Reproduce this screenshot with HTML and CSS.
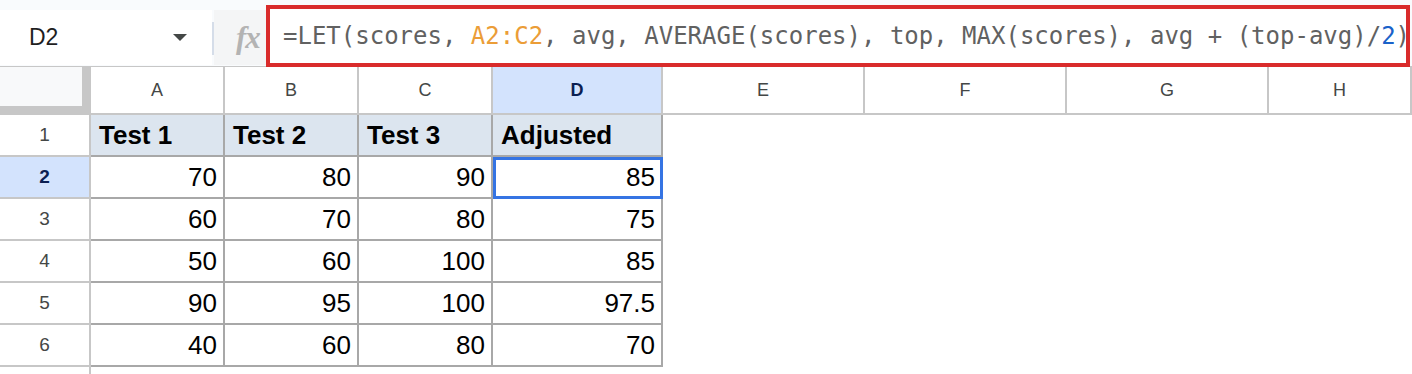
FILE: index.html
```html
<!DOCTYPE html>
<html lang="en">
<head>
    <meta charset="UTF-8">
    <title>Scores - LET formula</title>
    <link rel="stylesheet" href="styles.css">
</head>
<body>
    <div class="toolbar">
        <div class="name-box">
            <span class="cell-ref">D2</span>
            <span class="caret"></span>
        </div>
        <div class="divider"></div>
        <div class="fx-area"><span class="fx">fx</span></div>
        <div class="formula">=LET(scores, <span class="ref">A2:C2</span>, avg, AVERAGE(scores), top, MAX(scores), avg + (top-avg)/<span class="num">2</span>)</div>
    </div>

    <div class="sheet">
        <div class="row head-row">
            <div class="corner"></div>
            <div class="col-head">A</div>
            <div class="col-head">B</div>
            <div class="col-head">C</div>
            <div class="col-head active">D</div>
            <div class="col-head">E</div>
            <div class="col-head">F</div>
            <div class="col-head">G</div>
            <div class="col-head">H</div>
        </div>

        <div class="row">
            <div class="row-head">1</div>
            <div class="cell title">Test 1</div>
            <div class="cell title">Test 2</div>
            <div class="cell title">Test 3</div>
            <div class="cell title">Adjusted</div>
            <div class="blank"></div><div class="blank"></div><div class="blank"></div><div class="blank"></div>
        </div>

        <div class="row">
            <div class="row-head active">2</div>
            <div class="cell">70</div>
            <div class="cell">80</div>
            <div class="cell">90</div>
            <div class="cell selected">85</div>
            <div class="blank"></div><div class="blank"></div><div class="blank"></div><div class="blank"></div>
        </div>

        <div class="row">
            <div class="row-head">3</div>
            <div class="cell">60</div>
            <div class="cell">70</div>
            <div class="cell">80</div>
            <div class="cell">75</div>
            <div class="blank"></div><div class="blank"></div><div class="blank"></div><div class="blank"></div>
        </div>

        <div class="row">
            <div class="row-head">4</div>
            <div class="cell">50</div>
            <div class="cell">60</div>
            <div class="cell">100</div>
            <div class="cell">85</div>
            <div class="blank"></div><div class="blank"></div><div class="blank"></div><div class="blank"></div>
        </div>

        <div class="row">
            <div class="row-head">5</div>
            <div class="cell">90</div>
            <div class="cell">95</div>
            <div class="cell">100</div>
            <div class="cell">97.5</div>
            <div class="blank"></div><div class="blank"></div><div class="blank"></div><div class="blank"></div>
        </div>

        <div class="row">
            <div class="row-head">6</div>
            <div class="cell">40</div>
            <div class="cell">60</div>
            <div class="cell">80</div>
            <div class="cell">70</div>
            <div class="blank"></div><div class="blank"></div><div class="blank"></div><div class="blank"></div>
        </div>

        <div class="row last-row">
            <div class="row-head"></div>
        </div>
    </div>
</body>
</html>
```

FILE: styles.css
```css
:root {
    --cols: 91px 134px 134px 134px 170px 202px 202px 202px 143px;
    --grid-light: #c7c7c7;
    --grid-dark: #a8a8a8;
    --select-bg: #d3e3fd;
    --select-text: #0b1f52;
}

body {
    margin: 0;
    font-family: 'Liberation Sans', Arial, sans-serif;
    background: #fff;
    color: #000;
    overflow: hidden;
}

/* Formula bar */
.toolbar {
    display: flex;
    height: 66px;
    background: #f9fbfd;
}

.name-box {
    flex-shrink: 0;
    display: flex;
    align-items: center;
    box-sizing: border-box;
    width: 212px;
    height: 55px;
    margin-top: 10px;
    padding-left: 29px;
    background: #fff;
    font-size: 23px;
    color: #1f1f1f;
}

.cell-ref {
    flex: 1;
}

.caret {
    width: 0;
    height: 0;
    margin-right: 25px;
    border-left: 7px solid transparent;
    border-right: 7px solid transparent;
    border-top: 7px solid #444746;
}

.divider {
    flex-shrink: 0;
    width: 2px;
    height: 33px;
    margin-top: 22px;
    background: #d5dde9;
}

.fx-area {
    flex-shrink: 0;
    display: flex;
    align-items: center;
    box-sizing: border-box;
    width: 52px;
    height: 55px;
    margin-top: 10px;
    padding-left: 22px;
    background: #f4f5f6;
}

.fx {
    font-family: 'Liberation Serif', serif;
    font-style: italic;
    font-weight: bold;
    font-size: 31px;
    color: #b3b3b3;
    letter-spacing: -1px;
}

.formula {
    flex: 1;
    min-width: 0;
    overflow: hidden;
    display: flex;
    align-items: center;
    box-sizing: border-box;
    height: 62px;
    margin: 5px 2px 0 0;
    padding-left: 13px;
    border: 4px solid #d92b2b;
    background: #fff;
    font-family: 'DejaVu Sans Mono', 'Liberation Mono', monospace;
    font-size: 24px;
    color: #616161;
    white-space: pre;
    position: relative;
    z-index: 1;
}

.formula .ref {
    color: #eb9d37;
}

.formula .num {
    color: #1a62c9;
}

/* Grid */
.row {
    display: grid;
    grid-template-columns: var(--cols);
    height: 42px;
}

.head-row {
    height: 49px;
    box-sizing: border-box;
    border-top: 1px solid var(--grid-light);
}

.last-row {
    height: 7px;
}

.corner {
    background: #f8f9fa;
    border-right: 9px solid var(--grid-light);
    border-bottom: 9px solid var(--grid-light);
}

.col-head {
    display: flex;
    align-items: center;
    justify-content: center;
    border-right: 2px solid var(--grid-light);
    border-bottom: 2px solid var(--grid-light);
    font-size: 18px;
    color: #444746;
}

.col-head.active,
.row-head.active {
    background: var(--select-bg);
    color: var(--select-text);
    font-weight: bold;
}

.row-head {
    display: flex;
    align-items: center;
    justify-content: center;
    border-right: 2px solid var(--grid-light);
    border-bottom: 2px solid var(--grid-light);
    font-size: 19px;
    color: #444746;
}

.last-row .row-head {
    border-bottom: none;
}

.cell {
    display: flex;
    align-items: center;
    justify-content: flex-end;
    padding-right: 6px;
    border-right: 2px solid var(--grid-dark);
    border-bottom: 2px solid var(--grid-dark);
    font-size: 26px;
}

.cell.title {
    justify-content: flex-start;
    padding: 0 0 0 8px;
    background: #dce5ef;
    font-weight: bold;
}

.cell.selected {
    position: relative;
    outline: 3px solid #3574e3;
    outline-offset: -3px;
    z-index: 1;
}
```
